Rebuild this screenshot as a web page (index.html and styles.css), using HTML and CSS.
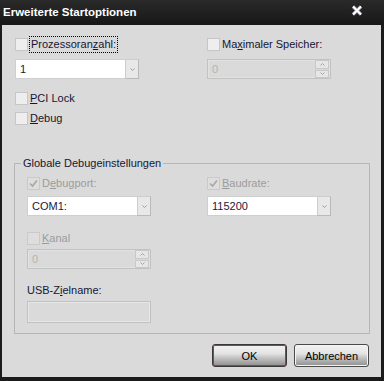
FILE: index.html
```html
<!DOCTYPE html>
<html lang="de">
<head>
    <meta charset="UTF-8">
    <meta name="viewport" content="width=device-width, initial-scale=1.0">
    <title>Erweiterte Startoptionen</title>
    <link rel="stylesheet" href="styles.css">
</head>
<body>
    <div class="window">
        <div class="titlebar">
            <span class="title">Erweiterte Startoptionen</span>
            <svg class="close" width="12" height="11" viewBox="0 0 12 11">
                <path d="M2 1.5 L10 9.5 M10 1.5 L2 9.5" stroke="#8e8e9c" stroke-width="3.4"/>
                <path d="M2 1.5 L10 9.5 M10 1.5 L2 9.5" stroke="#ffffff" stroke-width="2"/>
            </svg>
        </div>

        <div class="client">
            <div class="cols top-row">
                <div class="col">
                    <label class="check"><span class="box"></span><span class="focus">Prozessoran<u>z</u>ahl:</span></label>
                    <div class="combo">
                        <span class="value">1</span>
                        <span class="drop"><svg width="5" height="3" viewBox="0 0 5 3"><path d="M0.5 0.5 L2.5 2.5 L4.5 0.5" fill="none" stroke="#9c9c9c" stroke-width="1"/></svg></span>
                    </div>
                </div>
                <div class="col">
                    <label class="check"><span class="box"></span><span>Ma<u>x</u>imaler Speicher:</span></label>
                    <div class="spin disabled">
                        <span class="value">0</span>
                        <span class="spin-btns">
                            <span class="spin-btn"><svg width="5" height="3" viewBox="0 0 5 3"><path d="M0.5 2.5 L2.5 0.5 L4.5 2.5" fill="none" stroke="#a4a4a4" stroke-width="1"/></svg></span>
                            <span class="spin-btn"><svg width="5" height="3" viewBox="0 0 5 3"><path d="M0.5 0.5 L2.5 2.5 L4.5 0.5" fill="none" stroke="#a4a4a4" stroke-width="1"/></svg></span>
                        </span>
                    </div>
                </div>
            </div>

            <div class="checks">
                <label class="check"><span class="box"></span><span><u>P</u>CI Lock</span></label>
                <label class="check"><span class="box"></span><span><u>D</u>ebug</span></label>
            </div>

            <fieldset class="group">
                <legend>Globale Debugeinstellungen</legend>
                <div class="cols group-row">
                    <div class="col">
                        <label class="check disabled"><span class="box checked"><svg width="11" height="11" viewBox="0 0 11 11"><path d="M2 5.5 L4.5 8 L9 2.5" fill="none" stroke="#a6a6a6" stroke-width="1.6"/></svg></span><span>D<u>e</u>bugport:</span></label>
                        <div class="combo">
                            <span class="value">COM1:</span>
                            <span class="drop"><svg width="5" height="3" viewBox="0 0 5 3"><path d="M0.5 0.5 L2.5 2.5 L4.5 0.5" fill="none" stroke="#9c9c9c" stroke-width="1"/></svg></span>
                        </div>
                    </div>
                    <div class="col">
                        <label class="check disabled"><span class="box checked"><svg width="11" height="11" viewBox="0 0 11 11"><path d="M2 5.5 L4.5 8 L9 2.5" fill="none" stroke="#a6a6a6" stroke-width="1.6"/></svg></span><span><u>B</u>audrate:</span></label>
                        <div class="combo">
                            <span class="value">115200</span>
                            <span class="drop"><svg width="5" height="3" viewBox="0 0 5 3"><path d="M0.5 0.5 L2.5 2.5 L4.5 0.5" fill="none" stroke="#9c9c9c" stroke-width="1"/></svg></span>
                        </div>
                    </div>
                </div>

                <label class="check disabled kanal"><span class="box"></span><span><u>K</u>anal</span></label>
                <div class="spin disabled kanal-spin">
                    <span class="value">0</span>
                    <span class="spin-btns">
                        <span class="spin-btn"><svg width="5" height="3" viewBox="0 0 5 3"><path d="M0.5 2.5 L2.5 0.5 L4.5 2.5" fill="none" stroke="#a4a4a4" stroke-width="1"/></svg></span>
                        <span class="spin-btn"><svg width="5" height="3" viewBox="0 0 5 3"><path d="M0.5 0.5 L2.5 2.5 L4.5 0.5" fill="none" stroke="#a4a4a4" stroke-width="1"/></svg></span>
                    </span>
                </div>

                <div class="field-label">USB-Z<u>i</u>elname:</div>
                <div class="textbox"></div>
            </fieldset>

            <div class="buttons">
                <button class="btn default">OK</button>
                <button class="btn">Abbrechen</button>
            </div>
        </div>
    </div>
</body>
</html>
```

FILE: styles.css
```css
body {
    margin: 0;
    padding: 0;
    background-color: #1b1b1b;
    font-family: "Liberation Sans", Arial, sans-serif;
    font-size: 11px;
    color: #161634;
}
.window {
    width: 384px;
    height: 381px;
    background-color: #1b1b1b;
    overflow: hidden;
}
.titlebar {
    height: 25px;
    display: flex;
    align-items: center;
    justify-content: space-between;
    padding: 0 21px 0 3px;
    background: linear-gradient(#2a2a2a, #171717);
}
.title {
    color: #ffffff;
    font-weight: bold;
    font-size: 11.5px;
    margin-top: -1px;
}
.close {
    margin-top: -5px;
}
.client {
    height: 352px;
    margin: 0 3px 0 2px;
    background-color: #dadada;
    overflow: hidden;
}
.cols {
    display: grid;
}
.top-row {
    grid-template-columns: 192px 1fr;
    padding-left: 13px;
    margin-top: 13px;
}
.col {
    display: flex;
    flex-direction: column;
    gap: 8px;
}
.check {
    display: flex;
    align-items: center;
    gap: 2px;
    height: 13px;
    line-height: 13px;
    white-space: nowrap;
}
.check.disabled {
    color: #9c9c9c;
}
.box {
    width: 11px;
    height: 11px;
    border: 1px solid #c6c6c6;
    background-color: #eeeeee;
    flex-shrink: 0;
    display: flex;
}
.disabled .box {
    background-color: #dedede;
    border-color: #cacaca;
}
.focus {
    outline: 1px dotted #000000;
    outline-offset: 1px;
    margin-left: 1px;
}
.combo, .spin {
    width: 124px;
    height: 20px;
    display: flex;
    box-sizing: border-box;
}
.combo .value {
    flex: 1;
    background-color: #ffffff;
    border: 1px solid #cfcfcf;
    border-right: none;
    padding-left: 4px;
    line-height: 18px;
    color: #1a1a3a;
}
.drop {
    width: 12px;
    background-color: #e8e8e8;
    border: 1px solid #cdcdcd;
    border-right-color: #b9b9b9;
    border-bottom-color: #b9b9b9;
    display: flex;
    align-items: center;
    justify-content: center;
}
.spin {
    border: 1px solid #c2c2c2;
    background-color: #dadada;
    box-shadow: inset 0 0 0 1px #e2e2e2;
}
.spin .value {
    flex: 1;
    padding-left: 4px;
    line-height: 18px;
    color: #b4b4b4;
}
.spin-btns {
    width: 14px;
    display: flex;
    flex-direction: column;
    justify-content: center;
    gap: 1px;
    margin-right: 1px;
}
.spin-btn {
    height: 7px;
    background-color: #e6e6e6;
    border: 1px solid #c8c8c8;
    display: flex;
    align-items: center;
    justify-content: center;
}
.checks {
    display: flex;
    flex-direction: column;
    gap: 7px;
    padding-left: 13px;
    margin-top: 13px;
}
.group {
    width: 356px;
    box-sizing: border-box;
    margin: 32px 0 0 12px;
    padding: 7px 12px 10px 12px;
    border: 1px solid #b6b6b6;
    min-width: 0;
}
.group legend {
    padding: 0 2px;
    margin-left: -6px;
    line-height: 13px;
    color: #161634;
}
.group-row {
    grid-template-columns: 180px 1fr;
}
.group-row .col {
    gap: 6px;
}
.kanal {
    margin-top: 16px;
}
.kanal-spin {
    margin-top: 4px;
}
.field-label {
    margin-top: 15px;
    line-height: 13px;
}
.textbox {
    width: 124px;
    height: 22px;
    box-sizing: border-box;
    margin-top: 4px;
    border: 1px solid #c2c2c2;
    box-shadow: inset 0 0 0 1px #e6e6e6;
    background-color: #dadada;
}
.buttons {
    display: flex;
    justify-content: flex-end;
    gap: 7px;
    padding-right: 12px;
    margin-top: 10px;
}
.btn {
    width: 75px;
    height: 23px;
    font-family: "Liberation Sans", Arial, sans-serif;
    font-size: 11px;
    color: #000000;
    border: 1px solid #4a4a4a;
    border-radius: 3px;
    box-shadow: inset 0 0 0 1px #f4f4f4;
    background: linear-gradient(#f3f3f3 0%, #e4e4e4 40%, #c4c4c4 60%, #8e8e8e 100%);
    padding: 0;
}
.btn.default {
    border-color: #3a3a3a;
    box-shadow: inset 0 0 0 1px #e0202c;
}
```
